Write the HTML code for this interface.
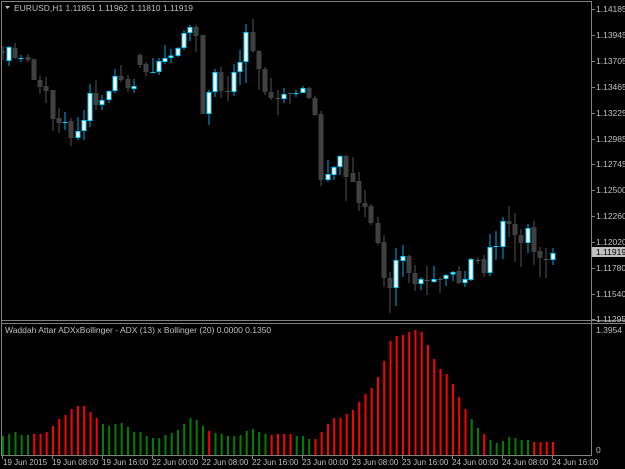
<!DOCTYPE html>
<html><head><meta charset="utf-8"><style>
html,body{margin:0;padding:0;background:#000;}
svg{display:block;}
text{font-family:"Liberation Sans",sans-serif;font-size:8.5px;fill:#c0c0c0;}
.t text{font-size:8px;}
.ib rect{width:2px;}
</style></head><body>
<svg width="625" height="469" viewBox="0 0 625 469" xmlns="http://www.w3.org/2000/svg">
<rect width="625" height="469" fill="#000"/>
<g stroke="#808080" stroke-width="1" fill="none">
<line x1="1.5" y1="1.5" x2="591.5" y2="1.5"/>
<line x1="1.5" y1="1" x2="1.5" y2="456"/>
<line x1="591.5" y1="1" x2="591.5" y2="456"/>
<line x1="1" y1="320.5" x2="625" y2="320.5"/>
<line x1="1" y1="323.5" x2="625" y2="323.5"/>
<line x1="1" y1="455.5" x2="592" y2="455.5"/>
</g>
<g stroke="#808080">
<line x1="592" y1="9.5" x2="595" y2="9.5"/><line x1="592" y1="35.5" x2="595" y2="35.5"/><line x1="592" y1="61.5" x2="595" y2="61.5"/><line x1="592" y1="87.5" x2="595" y2="87.5"/><line x1="592" y1="113.5" x2="595" y2="113.5"/><line x1="592" y1="139.5" x2="595" y2="139.5"/><line x1="592" y1="164.5" x2="595" y2="164.5"/><line x1="592" y1="190.5" x2="595" y2="190.5"/><line x1="592" y1="216.5" x2="595" y2="216.5"/><line x1="592" y1="242.5" x2="595" y2="242.5"/><line x1="592" y1="268.5" x2="595" y2="268.5"/><line x1="592" y1="294.5" x2="595" y2="294.5"/><line x1="592" y1="319.5" x2="595" y2="319.5"/>
<line x1="2.5" y1="455" x2="2.5" y2="459"/><line x1="52.5" y1="455" x2="52.5" y2="459"/><line x1="102.5" y1="455" x2="102.5" y2="459"/><line x1="152.5" y1="455" x2="152.5" y2="459"/><line x1="202.5" y1="455" x2="202.5" y2="459"/><line x1="252.5" y1="455" x2="252.5" y2="459"/><line x1="302.5" y1="455" x2="302.5" y2="459"/><line x1="352.5" y1="455" x2="352.5" y2="459"/><line x1="402.5" y1="455" x2="402.5" y2="459"/><line x1="452.5" y1="455" x2="452.5" y2="459"/><line x1="502.5" y1="455" x2="502.5" y2="459"/><line x1="552.5" y1="455" x2="552.5" y2="459"/>
</g>
<g>
<text x="596" y="12">1.14185</text><text x="596" y="38">1.13945</text><text x="596" y="64">1.13705</text><text x="596" y="90">1.13465</text><text x="596" y="116">1.13225</text><text x="596" y="142">1.12985</text><text x="596" y="167">1.12745</text><text x="596" y="193">1.12500</text><text x="596" y="219">1.12260</text><text x="596" y="245">1.12020</text><text x="596" y="271">1.11780</text><text x="596" y="297">1.11540</text><text x="596" y="322">1.11295</text>
<text x="596" y="333">1.3954</text><text x="596" y="453">0</text>
</g>
<rect x="592" y="247" width="33" height="10" fill="#c0c0c0"/>
<text x="596" y="255" style="fill:#000">1.11919</text>
<g class="t">
<text x="3" y="465">19 Jun 2015</text><text x="52" y="465">19 Jun 08:00</text><text x="102" y="465">19 Jun 16:00</text><text x="152" y="465">22 Jun 00:00</text><text x="202" y="465">22 Jun 08:00</text><text x="252" y="465">22 Jun 16:00</text><text x="302" y="465">23 Jun 00:00</text><text x="352" y="465">23 Jun 08:00</text><text x="402" y="465">23 Jun 16:00</text><text x="452" y="465">24 Jun 00:00</text><text x="502" y="465">24 Jun 08:00</text><text x="552" y="465">24 Jun 16:00</text>
</g>
<polygon points="5,6 10,6 7.5,9" fill="#c0c0c0"/>
<text x="14" y="11">EURUSD,H1  1.11851 1.11962 1.11810 1.11919</text>
<text x="5" y="333">Waddah Attar ADXxBollinger - ADX (13) x Bollinger (20) 0.0000 0.1350</text>

<g stroke-width="1">
<line x1="3" y1="46" x2="3" y2="60" stroke="#555"/><line x1="1" y1="52" x2="5" y2="52" stroke="#555"/>
<line x1="9" y1="46" x2="9" y2="66" stroke="#00a8e0"/><rect x="7" y="47.5" width="4" height="13" fill="#fff" stroke="#00d0ff"/>
<line x1="15" y1="43" x2="15" y2="59" stroke="#555"/><rect x="12.5" y="48" width="5" height="10" fill="#404040"/>
<line x1="21" y1="55" x2="21" y2="62" stroke="#00a8e0"/><line x1="18.5" y1="58.5" x2="23.5" y2="58.5" stroke="#00d0ff"/>
<line x1="28" y1="54" x2="28" y2="62" stroke="#555"/><rect x="25.5" y="57" width="5" height="3" fill="#404040"/>
<line x1="34" y1="59" x2="34" y2="80" stroke="#555"/><rect x="31.5" y="59" width="5" height="21" fill="#404040"/>
<line x1="40" y1="76" x2="40" y2="94" stroke="#555"/><rect x="37.5" y="80" width="5" height="7" fill="#404040"/>
<line x1="46" y1="77" x2="46" y2="103" stroke="#555"/><rect x="43.5" y="86" width="5" height="5" fill="#404040"/>
<line x1="53" y1="90" x2="53" y2="131" stroke="#555"/><rect x="50.5" y="90" width="5" height="29" fill="#404040"/>
<line x1="59" y1="108" x2="59" y2="133" stroke="#555"/><rect x="56.5" y="118" width="5" height="5" fill="#404040"/>
<line x1="65" y1="112" x2="65" y2="130" stroke="#00a8e0"/><line x1="62.5" y1="122.5" x2="67.5" y2="122.5" stroke="#00d0ff"/>
<line x1="71" y1="118" x2="71" y2="146" stroke="#555"/><rect x="68.5" y="121" width="5" height="17" fill="#404040"/>
<line x1="78" y1="117" x2="78" y2="140" stroke="#00a8e0"/><rect x="76" y="131.5" width="4" height="6" fill="#fff" stroke="#00d0ff"/>
<line x1="84" y1="110" x2="84" y2="140" stroke="#00a8e0"/><rect x="82" y="120.5" width="4" height="10" fill="#fff" stroke="#00d0ff"/>
<line x1="90" y1="84" x2="90" y2="127" stroke="#00a8e0"/><rect x="88" y="93.5" width="4" height="27" fill="#fff" stroke="#00d0ff"/>
<line x1="96" y1="80" x2="96" y2="110" stroke="#555"/><rect x="93.5" y="93" width="5" height="12" fill="#404040"/>
<line x1="102" y1="95" x2="102" y2="110" stroke="#00a8e0"/><rect x="100" y="100.5" width="4" height="4" fill="#fff" stroke="#00d0ff"/>
<line x1="109" y1="90" x2="109" y2="103" stroke="#00a8e0"/><rect x="107" y="91.5" width="4" height="8" fill="#fff" stroke="#00d0ff"/>
<line x1="115" y1="69" x2="115" y2="93" stroke="#00a8e0"/><rect x="113" y="76.5" width="4" height="14" fill="#fff" stroke="#00d0ff"/>
<line x1="121" y1="65" x2="121" y2="82" stroke="#555"/><rect x="118.5" y="76" width="5" height="4" fill="#404040"/>
<line x1="128" y1="75" x2="128" y2="92" stroke="#555"/><rect x="125.5" y="79" width="5" height="9" fill="#404040"/>
<line x1="134" y1="79" x2="134" y2="93" stroke="#00a8e0"/><rect x="132" y="86.5" width="4" height="2" fill="#fff" stroke="#00d0ff"/>
<line x1="140" y1="53" x2="140" y2="68" stroke="#555"/><rect x="137.5" y="55" width="5" height="10" fill="#404040"/>
<line x1="146" y1="62" x2="146" y2="76" stroke="#555"/><rect x="143.5" y="64" width="5" height="8" fill="#404040"/>
<line x1="153" y1="58" x2="153" y2="73" stroke="#00a8e0"/><line x1="150.5" y1="72.5" x2="155.5" y2="72.5" stroke="#00d0ff"/>
<line x1="159" y1="58" x2="159" y2="75" stroke="#00a8e0"/><rect x="157" y="61.5" width="4" height="10" fill="#fff" stroke="#00d0ff"/>
<line x1="165" y1="45" x2="165" y2="64" stroke="#00a8e0"/><rect x="163" y="58.5" width="4" height="3" fill="#fff" stroke="#00d0ff"/>
<line x1="171" y1="49" x2="171" y2="63" stroke="#00a8e0"/><rect x="169" y="56" width="4" height="1.5" fill="#fff" stroke="#00d0ff"/>
<line x1="178" y1="47" x2="178" y2="57" stroke="#00a8e0"/><rect x="176" y="48.5" width="4" height="7" fill="#fff" stroke="#00d0ff"/>
<line x1="184" y1="30" x2="184" y2="50" stroke="#00a8e0"/><rect x="182" y="33.5" width="4" height="14" fill="#fff" stroke="#00d0ff"/>
<line x1="190" y1="25" x2="190" y2="41" stroke="#00a8e0"/><rect x="188" y="27.5" width="4" height="5" fill="#fff" stroke="#00d0ff"/>
<line x1="196" y1="25" x2="196" y2="52" stroke="#555"/><rect x="193.5" y="27" width="5" height="9" fill="#404040"/>
<line x1="203" y1="35" x2="203" y2="114" stroke="#555"/><rect x="200.5" y="35" width="5" height="79" fill="#404040"/>
<line x1="209" y1="90" x2="209" y2="125" stroke="#00a8e0"/><rect x="207" y="92.5" width="4" height="21" fill="#fff" stroke="#00d0ff"/>
<line x1="215" y1="69" x2="215" y2="97" stroke="#00a8e0"/><rect x="213" y="72.5" width="4" height="19" fill="#fff" stroke="#00d0ff"/>
<line x1="221" y1="67" x2="221" y2="98" stroke="#555"/><rect x="218.5" y="72" width="5" height="19" fill="#404040"/>
<line x1="228" y1="76" x2="228" y2="101" stroke="#555"/><line x1="225.5" y1="91.5" x2="230.5" y2="91.5" stroke="#555"/>
<line x1="234" y1="64" x2="234" y2="96" stroke="#00a8e0"/><rect x="232" y="72.5" width="4" height="19" fill="#fff" stroke="#00d0ff"/>
<line x1="240" y1="50" x2="240" y2="85" stroke="#00a8e0"/><rect x="238" y="62.5" width="4" height="9" fill="#fff" stroke="#00d0ff"/>
<line x1="246" y1="24" x2="246" y2="83" stroke="#00a8e0"/><rect x="244" y="32.5" width="4" height="29" fill="#fff" stroke="#00d0ff"/>
<line x1="253" y1="19" x2="253" y2="53" stroke="#555"/><rect x="250.5" y="32" width="5" height="19" fill="#404040"/>
<line x1="259" y1="50" x2="259" y2="90" stroke="#555"/><rect x="256.5" y="51" width="5" height="18" fill="#404040"/>
<line x1="265" y1="67" x2="265" y2="95" stroke="#555"/><rect x="262.5" y="69" width="5" height="23" fill="#404040"/>
<line x1="271" y1="78" x2="271" y2="100" stroke="#555"/><rect x="268.5" y="92" width="5" height="6" fill="#404040"/>
<line x1="278" y1="90" x2="278" y2="115" stroke="#555"/><line x1="275.5" y1="98.5" x2="280.5" y2="98.5" stroke="#555"/>
<line x1="284" y1="88" x2="284" y2="103" stroke="#00a8e0"/><rect x="282" y="94.5" width="4" height="4" fill="#fff" stroke="#00d0ff"/>
<line x1="290" y1="93" x2="290" y2="104" stroke="#555"/><line x1="287.5" y1="93.5" x2="292.5" y2="93.5" stroke="#555"/>
<line x1="296" y1="90" x2="296" y2="97" stroke="#00a8e0"/><line x1="293.5" y1="93.5" x2="298.5" y2="93.5" stroke="#00d0ff"/>
<line x1="303" y1="86" x2="303" y2="93" stroke="#00a8e0"/><rect x="301" y="88.5" width="4" height="4" fill="#fff" stroke="#00d0ff"/>
<line x1="309" y1="87" x2="309" y2="99" stroke="#555"/><rect x="306.5" y="88" width="5" height="10" fill="#404040"/>
<line x1="315" y1="96" x2="315" y2="116" stroke="#555"/><rect x="312.5" y="98" width="5" height="17" fill="#404040"/>
<line x1="321" y1="111" x2="321" y2="186" stroke="#555"/><rect x="318.5" y="114" width="5" height="66" fill="#404040"/>
<line x1="328" y1="160" x2="328" y2="182" stroke="#00a8e0"/><rect x="326" y="174.5" width="4" height="5" fill="#fff" stroke="#00d0ff"/>
<line x1="334" y1="166" x2="334" y2="180" stroke="#00a8e0"/><rect x="332" y="167.5" width="4" height="7" fill="#fff" stroke="#00d0ff"/>
<line x1="340" y1="155" x2="340" y2="175" stroke="#00a8e0"/><rect x="338" y="156.5" width="4" height="10" fill="#fff" stroke="#00d0ff"/>
<line x1="346" y1="155" x2="346" y2="201" stroke="#555"/><rect x="343.5" y="156" width="5" height="21" fill="#404040"/>
<line x1="353" y1="157" x2="353" y2="182" stroke="#555"/><rect x="350.5" y="173" width="5" height="9" fill="#404040"/>
<line x1="359" y1="172" x2="359" y2="211" stroke="#555"/><rect x="356.5" y="181" width="5" height="22" fill="#404040"/>
<line x1="365" y1="190" x2="365" y2="217" stroke="#555"/><rect x="362.5" y="203" width="5" height="4" fill="#404040"/>
<line x1="371" y1="204" x2="371" y2="225" stroke="#555"/><rect x="368.5" y="206" width="5" height="17" fill="#404040"/>
<line x1="378" y1="217" x2="378" y2="245" stroke="#555"/><rect x="375.5" y="223" width="5" height="20" fill="#404040"/>
<line x1="384" y1="235" x2="384" y2="287" stroke="#555"/><rect x="381.5" y="242" width="5" height="36" fill="#404040"/>
<line x1="390" y1="272" x2="390" y2="313" stroke="#555"/><rect x="387.5" y="278" width="5" height="10" fill="#404040"/>
<line x1="396" y1="248" x2="396" y2="306" stroke="#00a8e0"/><rect x="394" y="260.5" width="4" height="27" fill="#fff" stroke="#00d0ff"/>
<line x1="403" y1="245" x2="403" y2="277" stroke="#00a8e0"/><rect x="401" y="256.5" width="4" height="4" fill="#fff" stroke="#00d0ff"/>
<line x1="409" y1="255" x2="409" y2="283" stroke="#555"/><rect x="406.5" y="256" width="5" height="17" fill="#404040"/>
<line x1="415" y1="265" x2="415" y2="291" stroke="#555"/><rect x="412.5" y="273" width="5" height="11" fill="#404040"/>
<line x1="421" y1="277" x2="421" y2="290" stroke="#00a8e0"/><rect x="419" y="279.5" width="4" height="4" fill="#fff" stroke="#00d0ff"/>
<line x1="427" y1="266" x2="427" y2="295" stroke="#555"/><line x1="424.5" y1="280.5" x2="429.5" y2="280.5" stroke="#555"/>
<line x1="434" y1="266" x2="434" y2="283" stroke="#00a8e0"/><rect x="432" y="279.5" width="4" height="2" fill="#fff" stroke="#00d0ff"/>
<line x1="440" y1="277" x2="440" y2="293" stroke="#555"/><line x1="437.5" y1="279.5" x2="442.5" y2="279.5" stroke="#555"/>
<line x1="446" y1="274" x2="446" y2="286" stroke="#00a8e0"/><rect x="444" y="275.5" width="4" height="3" fill="#fff" stroke="#00d0ff"/>
<line x1="453" y1="271" x2="453" y2="281" stroke="#00a8e0"/><rect x="451" y="272.5" width="4" height="1.5" fill="#fff" stroke="#00d0ff"/>
<line x1="459" y1="266" x2="459" y2="284" stroke="#555"/><rect x="456.5" y="271" width="5" height="12" fill="#404040"/>
<line x1="465" y1="271" x2="465" y2="287" stroke="#00a8e0"/><rect x="463" y="279.5" width="4" height="3" fill="#fff" stroke="#00d0ff"/>
<line x1="471" y1="258" x2="471" y2="281" stroke="#00a8e0"/><rect x="469" y="259.5" width="4" height="20" fill="#fff" stroke="#00d0ff"/>
<line x1="478" y1="257" x2="478" y2="264" stroke="#555"/><line x1="475.5" y1="260.5" x2="480.5" y2="260.5" stroke="#555"/>
<line x1="484" y1="255" x2="484" y2="277" stroke="#555"/><rect x="481.5" y="259" width="5" height="14" fill="#404040"/>
<line x1="490" y1="234" x2="490" y2="276" stroke="#00a8e0"/><rect x="488" y="247.5" width="4" height="25" fill="#fff" stroke="#00d0ff"/>
<line x1="496" y1="231" x2="496" y2="260" stroke="#00a8e0"/><line x1="493.5" y1="246.5" x2="498.5" y2="246.5" stroke="#00d0ff"/>
<line x1="503" y1="217" x2="503" y2="259" stroke="#00a8e0"/><rect x="501" y="221.5" width="4" height="25" fill="#fff" stroke="#00d0ff"/>
<line x1="509" y1="206" x2="509" y2="237" stroke="#555"/><rect x="506.5" y="221" width="5" height="3" fill="#404040"/>
<line x1="515" y1="213" x2="515" y2="262" stroke="#555"/><rect x="512.5" y="224" width="5" height="11" fill="#404040"/>
<line x1="521" y1="229" x2="521" y2="267" stroke="#555"/><rect x="518.5" y="235" width="5" height="8" fill="#404040"/>
<line x1="528" y1="224" x2="528" y2="253" stroke="#00a8e0"/><rect x="526" y="228.5" width="4" height="14" fill="#fff" stroke="#00d0ff"/>
<line x1="534" y1="221" x2="534" y2="265" stroke="#555"/><rect x="531.5" y="227" width="5" height="25" fill="#404040"/>
<line x1="540" y1="247" x2="540" y2="277" stroke="#555"/><rect x="537.5" y="251" width="5" height="7" fill="#404040"/>
<line x1="546" y1="248" x2="546" y2="278" stroke="#555"/><line x1="543.5" y1="259.5" x2="548.5" y2="259.5" stroke="#555"/>
<line x1="553" y1="248" x2="553" y2="265" stroke="#00a8e0"/><rect x="551" y="253.5" width="4" height="6" fill="#fff" stroke="#00d0ff"/>
</g>

<g class="ib">
<rect x="2" y="436" width="2" height="19" fill="#008000"/><rect x="8.2" y="434" width="2" height="21" fill="#008000"/><rect x="14.5" y="432" width="2" height="23" fill="#008000"/><rect x="20.7" y="435" width="2" height="20" fill="#008000"/><rect x="27" y="435" width="2" height="20" fill="#008000"/><rect x="33.2" y="434" width="2" height="21" fill="#ff0000"/><rect x="39.5" y="434" width="2" height="21" fill="#ff0000"/><rect x="45.7" y="432" width="2" height="23" fill="#ff0000"/><rect x="52" y="426" width="2" height="29" fill="#ff0000"/><rect x="58.2" y="419" width="2" height="36" fill="#ff0000"/><rect x="64.5" y="415" width="2" height="40" fill="#ff0000"/><rect x="70.7" y="409" width="2" height="46" fill="#ff0000"/><rect x="77" y="406" width="2" height="49" fill="#ff0000"/><rect x="83.2" y="406" width="2" height="49" fill="#ff0000"/><rect x="89.5" y="412" width="2" height="43" fill="#ff0000"/><rect x="95.7" y="418" width="2" height="37" fill="#ff0000"/><rect x="102" y="424" width="2" height="31" fill="#008000"/><rect x="108.2" y="426" width="2" height="29" fill="#008000"/><rect x="114.5" y="424" width="2" height="31" fill="#008000"/><rect x="120.7" y="423" width="2" height="32" fill="#008000"/><rect x="127" y="427" width="2" height="28" fill="#008000"/><rect x="133.2" y="432" width="2" height="23" fill="#008000"/><rect x="139.5" y="432" width="2" height="23" fill="#008000"/><rect x="145.7" y="436" width="2" height="19" fill="#008000"/><rect x="152" y="438" width="2" height="17" fill="#008000"/><rect x="158.2" y="438" width="2" height="17" fill="#008000"/><rect x="164.5" y="435" width="2" height="20" fill="#008000"/><rect x="170.7" y="433" width="2" height="22" fill="#008000"/><rect x="177" y="430" width="2" height="25" fill="#008000"/><rect x="183.2" y="424" width="2" height="31" fill="#008000"/><rect x="189.5" y="418" width="2" height="37" fill="#008000"/><rect x="195.7" y="420" width="2" height="35" fill="#008000"/><rect x="202" y="426" width="2" height="29" fill="#008000"/><rect x="208.2" y="431" width="2" height="24" fill="#ff0000"/><rect x="214.5" y="433" width="2" height="22" fill="#008000"/><rect x="220.7" y="434" width="2" height="21" fill="#008000"/><rect x="227" y="436" width="2" height="19" fill="#008000"/><rect x="233.2" y="436" width="2" height="19" fill="#008000"/><rect x="239.5" y="435" width="2" height="20" fill="#008000"/><rect x="245.7" y="431" width="2" height="24" fill="#008000"/><rect x="252" y="429" width="2" height="26" fill="#008000"/><rect x="258.2" y="432" width="2" height="23" fill="#008000"/><rect x="264.5" y="434" width="2" height="21" fill="#008000"/><rect x="270.7" y="435" width="2" height="20" fill="#ff0000"/><rect x="277" y="434" width="2" height="21" fill="#ff0000"/><rect x="283.2" y="434" width="2" height="21" fill="#ff0000"/><rect x="289.5" y="434" width="2" height="21" fill="#ff0000"/><rect x="295.7" y="436" width="2" height="19" fill="#008000"/>
<rect x="302" y="436" width="2" height="19" fill="#008000"/><rect x="308.2" y="439" width="2" height="16" fill="#008000"/><rect x="314.5" y="439" width="2" height="16" fill="#ff0000"/><rect x="320.7" y="432" width="2" height="23" fill="#ff0000"/><rect x="327" y="424" width="2" height="31" fill="#ff0000"/><rect x="333.2" y="418" width="2" height="37" fill="#ff0000"/><rect x="339.5" y="418" width="2" height="37" fill="#ff0000"/><rect x="345.7" y="414" width="2" height="41" fill="#ff0000"/><rect x="352" y="410" width="2" height="45" fill="#ff0000"/><rect x="358.2" y="402" width="2" height="53" fill="#ff0000"/><rect x="364.5" y="394" width="2" height="61" fill="#ff0000"/><rect x="370.7" y="388" width="2" height="67" fill="#ff0000"/><rect x="377" y="377" width="2" height="78" fill="#ff0000"/><rect x="383.2" y="361" width="2" height="94" fill="#ff0000"/><rect x="389.5" y="341" width="2" height="114" fill="#ff0000"/><rect x="395.7" y="336" width="2" height="119" fill="#ff0000"/><rect x="402" y="335" width="2" height="120" fill="#ff0000"/><rect x="408.2" y="332" width="2" height="123" fill="#ff0000"/><rect x="414.5" y="330" width="2" height="125" fill="#ff0000"/><rect x="420.7" y="332" width="2" height="123" fill="#ff0000"/><rect x="427" y="345" width="2" height="110" fill="#ff0000"/><rect x="433.2" y="359" width="2" height="96" fill="#ff0000"/><rect x="439.5" y="369" width="2" height="86" fill="#ff0000"/><rect x="445.7" y="374" width="2" height="81" fill="#ff0000"/><rect x="452" y="384" width="2" height="71" fill="#ff0000"/><rect x="458.2" y="397" width="2" height="58" fill="#ff0000"/><rect x="464.5" y="409" width="2" height="46" fill="#ff0000"/><rect x="470.7" y="419" width="2" height="36" fill="#008000"/><rect x="477" y="428" width="2" height="27" fill="#008000"/><rect x="483.2" y="434" width="2" height="21" fill="#ff0000"/><rect x="489.5" y="440" width="2" height="15" fill="#008000"/><rect x="495.7" y="443" width="2" height="12" fill="#008000"/><rect x="502" y="441" width="2" height="14" fill="#008000"/><rect x="508.2" y="437" width="2" height="18" fill="#008000"/><rect x="514.5" y="438" width="2" height="17" fill="#008000"/><rect x="520.7" y="440" width="2" height="15" fill="#008000"/><rect x="527" y="440" width="2" height="15" fill="#008000"/><rect x="533.2" y="442" width="2" height="13" fill="#ff0000"/><rect x="539.5" y="442" width="2" height="13" fill="#ff0000"/><rect x="545.7" y="442" width="2" height="13" fill="#ff0000"/><rect x="552" y="442" width="2" height="13" fill="#ff0000"/>
</g>
</svg>
</body></html>
